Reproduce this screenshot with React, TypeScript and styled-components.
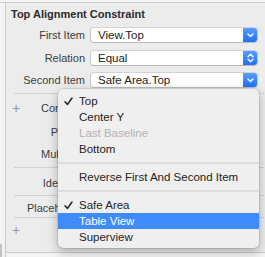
import React from "react";
import styled, { createGlobalStyle } from "styled-components";

const GlobalStyle = createGlobalStyle`
  html, body {
    margin: 0;
    padding: 0;
    background: #ececec;
  }
  body {
    font-family: "Liberation Sans", Arial, sans-serif;
    -webkit-font-smoothing: antialiased;
  }
`;

const Inspector = styled.div`
  position: relative;
  width: 265px;
  height: 257px;
  overflow: hidden;
  display: flex;
  flex-direction: column;
  background: #ececec;
`;

const TopStrip = styled.div`
  height: 2px;
  flex: none;
  background: #f4f4f4;
  border-bottom: 1px solid #cdcdcd;
`;

const Body = styled.div`
  flex: 1;
  display: flex;
`;

const Gutter = styled.div`
  width: 5px;
  flex: none;
  background: #f3f3f3;
  border-right: 1px solid #c9c9c9;
  display: flex;
  flex-direction: column;
  justify-content: flex-end;
`;

const GutterTab = styled.div`
  width: 2px;
  height: 13px;
  background: #c4c4c4;
`;

const Main = styled.div`
  flex: 1;
  display: flex;
  flex-direction: column;
`;

const Content = styled.div`
  flex: 1;
  display: flex;
  flex-direction: column;
  border-bottom: 1px solid #cdcdcd;
`;

const Footer = styled.div`
  height: 4px;
  flex: none;
  background: #f4f4f4;
`;

const Title = styled.div`
  height: 21px;
  line-height: 22px;
  padding-left: 5px;
  font-size: 11px;
  font-weight: bold;
  color: #2b2b2b;
`;

const Form = styled.div`
  margin-top: 3px;
  display: grid;
  grid-template-columns: 79px 168px;
  column-gap: 5px;
  row-gap: 6.5px;
  align-items: center;
`;

const Label = styled.div`
  text-align: right;
  font-size: 11px;
  color: #3c3c3c;
  white-space: nowrap;
`;

const Popup = styled.div`
  height: 16px;
  box-sizing: border-box;
  display: flex;
  background: #ffffff;
  border: 1px solid #c6c6c6;
  border-top-color: #d2d2d2;
  border-bottom-color: #b9b9b9;
  border-radius: 4px;
  overflow: hidden;
`;

const PopupValue = styled.div`
  flex: 1;
  padding-left: 7px;
  font-size: 11.5px;
  line-height: 14px;
  color: #222;
`;

const PopupButton = styled.div`
  width: 15px;
  display: flex;
  align-items: center;
  justify-content: center;
  background: linear-gradient(#5aa1ff, #1b6ef6);
  margin: -1px -1px -1px 0;
  border-radius: 0 4px 4px 0;
`;

const Divider = styled.div<{ $top: number }>`
  height: 1px;
  margin: ${(p) => p.$top}px 1px 0 8px;
  background: #d2d2d2;
`;

const FieldRow = styled.div<{ $top: number }>`
  height: 16px;
  margin-top: ${(p) => p.$top}px;
  display: grid;
  grid-template-columns: 79px 1fr;
  column-gap: 5px;
  align-items: center;
`;

const LabelCell = styled.div`
  display: flex;
  align-items: center;
  justify-content: space-between;
  padding-left: 6px;
`;

const Plus = styled.span`
  font-size: 14px;
  font-weight: 300;
  color: #9a9a9a;
  line-height: 16px;
`;

const Menu = styled.div`
  position: absolute;
  left: 58px;
  top: 89px;
  width: 201px;
  padding: 4px 0 3px;
  background: #efefef;
  border-radius: 5px;
  box-shadow: 0 0 0 0.5px rgba(0, 0, 0, 0.18), 0 4px 12px rgba(0, 0, 0, 0.28);
`;

const MenuItem = styled.div<{ $active?: boolean; $disabled?: boolean }>`
  height: 16px;
  display: flex;
  align-items: center;
  font-size: 11.5px;
  background: ${(p) => (p.$active ? "#3f8bfd" : "transparent")};
  color: ${(p) => (p.$active ? "#ffffff" : p.$disabled ? "#b3b3b3" : "#232323")};
  white-space: nowrap;
`;

const CheckSlot = styled.div`
  width: 21px;
  display: flex;
  justify-content: flex-end;
  padding-right: 6px;
  box-sizing: border-box;
`;

const MenuSeparator = styled.div`
  height: 12px;
  display: flex;
  align-items: center;
  &::after {
    content: "";
    flex: 1;
    height: 2px;
    background: #dcdcdc;
  }
`;

const ChevronDown = () => (
  <svg width="7" height="5" viewBox="0 0 7 5">
    <path d="M1 1 L3.5 3.5 L6 1" fill="none" stroke="#fff" strokeWidth="1.4" strokeLinecap="round" strokeLinejoin="round" />
  </svg>
);

const ChevronUpDown = () => (
  <svg width="7" height="10" viewBox="0 0 7 10">
    <path d="M1 3.8 L3.5 1.3 L6 3.8 M1 6.2 L3.5 8.7 L6 6.2" fill="none" stroke="#fff" strokeWidth="1.4" strokeLinecap="round" strokeLinejoin="round" />
  </svg>
);

const Check = () => (
  <svg width="9" height="9" viewBox="0 0 9 9">
    <path d="M1 4.8 L3.4 7.5 L8 1" fill="none" stroke="#2a2a2a" strokeWidth="1.5" strokeLinecap="round" strokeLinejoin="round" />
  </svg>
);

type Item = { text?: string; checked?: boolean; active?: boolean; disabled?: boolean; sep?: boolean };

const menuItems: Item[] = [
  { text: "Top", checked: true },
  { text: "Center Y" },
  { text: "Last Baseline", disabled: true },
  { text: "Bottom" },
  { sep: true },
  { text: "Reverse First And Second Item" },
  { sep: true },
  { text: "Safe Area", checked: true },
  { text: "Table View", active: true },
  { text: "Superview" },
];

const App: React.FC = () => {
  return (
    <Inspector>
      <GlobalStyle />
      <TopStrip />
      <Body>
        <Gutter>
          <GutterTab />
        </Gutter>
        <Main>
          <Content>
            <Title>Top Alignment Constraint</Title>
            <Form>
              <Label>First Item</Label>
              <Popup>
                <PopupValue>View.Top</PopupValue>
                <PopupButton>
                  <ChevronDown />
                </PopupButton>
              </Popup>
              <Label>Relation</Label>
              <Popup>
                <PopupValue>Equal</PopupValue>
                <PopupButton>
                  <ChevronUpDown />
                </PopupButton>
              </Popup>
              <Label>Second Item</Label>
              <Popup>
                <PopupValue>Safe Area.Top</PopupValue>
                <PopupButton>
                  <ChevronDown />
                </PopupButton>
              </Popup>
            </Form>
            <Divider $top={5} />
            <FieldRow $top={6}>
              <LabelCell>
                <Plus>+</Plus>
                <Label>Constant</Label>
              </LabelCell>
            </FieldRow>
            <FieldRow $top={8}>
              <LabelCell>
                <span />
                <Label>Priority</Label>
              </LabelCell>
            </FieldRow>
            <FieldRow $top={6}>
              <LabelCell>
                <span />
                <Label>Multiplier</Label>
              </LabelCell>
            </FieldRow>
            <Divider $top={5} />
            <FieldRow $top={7}>
              <LabelCell>
                <span />
                <Label>Identifier</Label>
              </LabelCell>
            </FieldRow>
            <Divider $top={4} />
            <FieldRow $top={4}>
              <LabelCell>
                <span />
                <Label>Placeholder</Label>
              </LabelCell>
            </FieldRow>
            <Divider $top={1} />
            <FieldRow $top={4}>
              <LabelCell>
                <Plus>+</Plus>
              </LabelCell>
            </FieldRow>
          </Content>
          <Footer />
        </Main>
      </Body>

      <Menu>
        {menuItems.map((item, i) =>
          item.sep ? (
            <MenuSeparator key={i} />
          ) : (
            <MenuItem key={i} $active={item.active} $disabled={item.disabled}>
              <CheckSlot>{item.checked && <Check />}</CheckSlot>
              {item.text}
            </MenuItem>
          )
        )}
      </Menu>
    </Inspector>
  );
};

export default App;
